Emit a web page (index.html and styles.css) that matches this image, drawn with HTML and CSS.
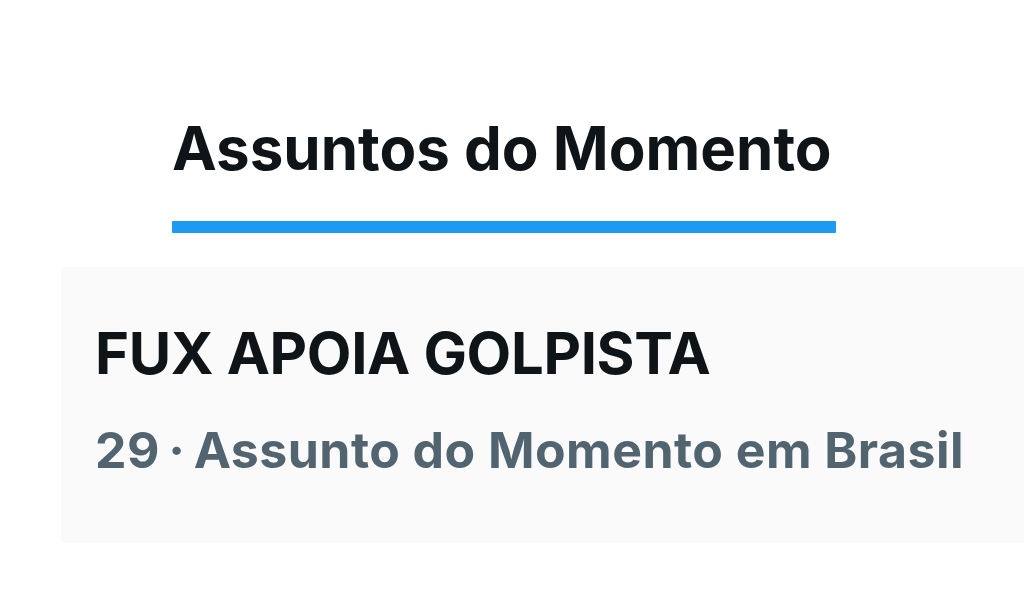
FILE: index.html
```html
<!DOCTYPE html>
<html lang="pt-BR">
<head>
<meta charset="utf-8">
<title>Assuntos do Momento</title>
<link rel="stylesheet" href="styles.css">
</head>
<body>
<div class="page">
  <header class="tabs">
    <div class="tab">
      <span class="tab-label">Assuntos do Momento</span>
      <span class="tab-indicator"></span>
    </div>
  </header>
  <section class="trend">
    <div class="trend-title">FUX APOIA GOLPISTA</div>
    <div class="trend-meta">29&thinsp;·&thinsp;Assunto do Momento em Brasil</div>
  </section>
</div>
</body>
</html>
```
FILE: styles.css
```css
html, body {
  margin: 0;
  padding: 0;
  background: #ffffff;
}
body {
  width: 1024px;
  height: 599px;
  overflow: hidden;
  font-family: Inter, "Liberation Sans", Arial, sans-serif;
}
.page {
  display: flex;
  flex-direction: column;
}
.tabs {
  display: flex;
  padding: 108px 0 34px 172px;
}
.tab {
  display: flex;
  flex-direction: column;
  width: 664px;
}
.tab-label {
  font-size: 60px;
  font-weight: 700;
  color: #0f1419;
  line-height: 80px;
  letter-spacing: 0;
  white-space: nowrap;
}
.tab-indicator {
  display: block;
  height: 12px;
  margin-top: 33px;
  background: #1d9bf0;
  border-radius: 1px;
}
.trend {
  margin-left: 61px;
  height: 276px;
  background: #fafafa;
  padding: 51px 0 0 34px;
  box-sizing: border-box;
}
.trend-title {
  font-size: 58px;
  font-weight: 700;
  color: #0f1419;
  line-height: 70px;
  letter-spacing: -0.35px;
  white-space: nowrap;
}
.trend-meta {
  margin-top: 32px;
  font-size: 50px;
  font-weight: 700;
  color: #536471;
  line-height: 60px;
  letter-spacing: 0.45px;
  white-space: nowrap;
}
```
